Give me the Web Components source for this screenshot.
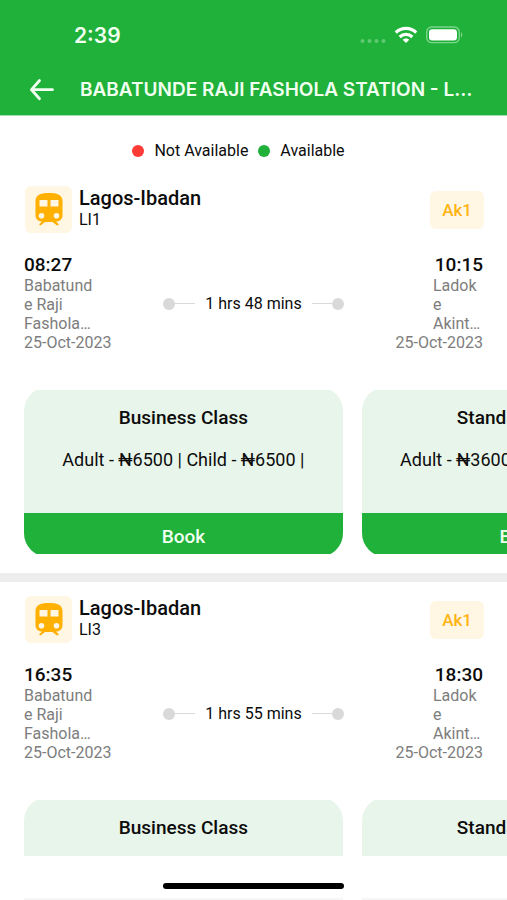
<!DOCTYPE html>
<html lang="en">
<head>
<meta charset="utf-8">
<meta name="viewport" content="width=device-width, initial-scale=1">
<title>Train schedule</title>
<style>
  :root { --green: #1fb139; --mint: #e8f5ea; --amber: #ffb414; --cream: #fff6e3; --grey: #7d7d7d; }
  html, body { height: 100%; }
  body { margin: 0; background: #fff; color: #0c0c0c; font-family: Roboto, "Liberation Sans", sans-serif; font-size: 16px; }
</style>
</head>
<body>
<schedule-screen></schedule-screen>
<script>
class Base extends HTMLElement {
  connectedCallback() {
    if (this.shadowRoot) return;
    this.attachShadow({ mode: 'open' }).innerHTML = '<style>*{box-sizing:border-box}</style>' + this.view();
  }
  a(name) { return this.getAttribute(name) || ''; }
}

customElements.define('status-bar', class extends Base {
  view() { return `
    <style>
      :host { display: flex; align-items: center; justify-content: space-between; height: 65px; padding: 6px 44px 0 74px; color: #f0fff0; }
      time { font: 600 21px/26px Inter, sans-serif; }
      .icons { display: flex; align-items: center; }
      svg { display: block; }
    </style>
    <time>2:39</time>
    <div class="icons">
      <svg width="103" height="20" viewBox="360 26 103 20" aria-hidden="true">
        <g fill="#62c973"><circle cx="362.500" cy="41" r="2"/><circle cx="369.500" cy="41" r="2"/><circle cx="376.500" cy="41" r="2"/><circle cx="383.500" cy="41" r="2"/></g>
        <g fill="none" stroke="#fff" stroke-width="3.200"><path d="M395.800 32.600a14.600 14.600 0 0 1 20.400 0"/><path d="M399.700 37a9 9 0 0 1 12.600 0"/></g>
        <path fill="#fff" d="M406 43l-3.300-3.300a4.800 4.800 0 0 1 6.600 0z"/>
        <rect x="426.700" y="27" width="32.600" height="15.600" rx="5" fill="none" stroke="#7dd48b" stroke-width="1.400"/>
        <rect x="429" y="29.200" width="28" height="11.200" rx="3.200" fill="#fff"/>
        <path fill="#7dd48b" d="M461 32.200c1.700.6 1.700 4.600 0 5.200z"/>
      </svg>
    </div>`; }
});

customElements.define('nav-bar', class extends Base {
  view() { return `
    <style>
      :host { display: flex; align-items: center; gap: 24px; height: 50px; padding: 0 24px 0 28px; color: #f0fff0; }
      button { flex: none; width: 28px; height: 28px; padding: 0; border: 0; background: none; color: inherit; }
      svg { display: block; }
      h1 { flex: 1; min-width: 0; margin: 0; font: 600 19px/26px Inter, sans-serif; white-space: nowrap; overflow: hidden; text-overflow: ellipsis; }
    </style>
    <button aria-label="Back"><svg width="28" height="28" viewBox="28 76 28 28" fill="none" stroke="currentColor" stroke-width="2.800" stroke-linecap="round" stroke-linejoin="round"><path d="M52.500 89.700H32M39.500 80.500L31.500 89.700l8 9"/></svg></button>
    <h1><slot></slot></h1>`; }
});

customElements.define('status-legend', class extends Base {
  view() { return `
    <style>
      :host { display: flex; justify-content: center; align-items: center; gap: 10px; padding: 24px 30px 24px 0; line-height: 22px; }
      span { display: flex; align-items: center; gap: 10px; }
      i { width: 12px; height: 12px; border-radius: 50%; background: var(--green); }
      .no { background: #ff3b36; }
    </style>
    <span><i class="no"></i>Not Available</span><span><i></i>Available</span>`; }
});

customElements.define('train-icon', class extends Base {
  view() { return `
    <style>
      :host { display: flex; align-items: center; justify-content: center; width: 47px; height: 47px; border-radius: 6px; background: var(--cream); }
      svg { display: block; }
    </style>
    <svg width="28" height="33" viewBox="0 0 28 33" aria-hidden="true">
      <path fill="#ffb000" fill-rule="evenodd" d="M14 0C21 0 27.500 1.500 27.500 8V22C27.500 26 25 28.500 21 28.500L24 31.500L22 32.500L17.500 29H10L5.500 32.500L4 31.500L7 28.500C3 28.500 .500 26 .500 22V8C.500 1.500 7 0 14 0ZM4.500 7V13.500H12.500V7ZM15.500 7V13.500H23.500V7ZM6.500 20A2.800 2.800 0 1 0 6.500 25.600A2.800 2.800 0 1 0 6.500 20ZM21.500 20A2.800 2.800 0 1 0 21.500 25.600A2.800 2.800 0 1 0 21.500 20Z"/>
    </svg>`; }
});

customElements.define('trip-stop', class extends Base {
  view() { return `
    <style>
      :host { display: flex; flex-direction: column; align-items: flex-start; color: var(--grey); line-height: 19px; }
      :host([end]) { align-items: flex-end; }
      b { font-size: 19px; line-height: 23px; font-weight: 500; color: #0c0c0c; }
      div { width: 76px; overflow-wrap: anywhere; }
      :host([end]) div { width: 50px; }
    </style>
    <b>${this.a('time')}</b><div><slot></slot></div><span>${this.a('date')}</span>`; }
});

customElements.define('trip-duration', class extends Base {
  view() { return `
    <style>
      :host { display: flex; align-items: center; gap: 10px; white-space: nowrap; line-height: 20px; padding-top: 2px; }
      i { display: flex; align-items: center; width: 32px; height: 12px; }
      i::before { content: ""; width: 12px; height: 12px; border-radius: 50%; background: #d9d9d9; }
      i::after { content: ""; flex: 1; height: 1px; background: #d9d9d9; }
      .end { flex-direction: row-reverse; }
    </style>
    <i></i><slot></slot><i class="end"></i>`; }
});

customElements.define('fare-card', class extends Base {
  view() { return `
    <style>
      :host { display: flex; flex-direction: column; border-radius: 24px; overflow: hidden; background: var(--mint); text-align: center; }
      h3 { margin: 0; padding: 19px 0 0; font-size: 19px; line-height: 24px; font-weight: 500; }
      p { margin: 0; padding: 19px 0 42px; font-size: 18px; line-height: 22px; white-space: nowrap; }
      button { height: 44px; padding: 3px 0 0; border: 0; background: var(--green); color: #f0fff0; font: 500 19px/24px Roboto, sans-serif; }
    </style>
    <h3>${this.a('name')}</h3><p><slot></slot></p><button>Book</button>`; }
});

customElements.define('trip-item', class extends Base {
  view() { return `
    <style>
      :host { display: block; border-bottom: 9px solid #ededed; margin-bottom: 14px; }
      header { display: flex; align-items: center; gap: 7px; padding: 0 23px 0 25px; }
      .name { flex: 1; }
      h2 { margin: 0; font-size: 20px; line-height: 24px; font-weight: 500; }
      small { display: block; font-size: 16px; line-height: 20px; padding-bottom: 3px; }
      mark { padding: 8px 12px; border-radius: 6px; background: var(--cream); color: var(--amber); font-size: 17px; line-height: 22px; font-weight: 500; }
      .times { display: grid; grid-template-columns: 1fr auto 1fr; align-items: center; padding: 20px 24px 38px; }
      .cards { display: flex; gap: 19px; padding-left: 24px; margin-bottom: 19px; overflow: hidden; }
      /* The strip trims a little off the cards' rounded ends. */
      fare-card { flex: 0 0 66%; margin: -3px 0; }
    </style>
    <header><train-icon></train-icon><div class="name"><h2>Lagos-Ibadan</h2><small>${this.a('code')}</small></div><mark>Ak1</mark></header>
    <div class="times">
      <trip-stop time="${this.a('from')}" date="25-Oct-2023">Babatunde Raji Fashola…</trip-stop>
      <trip-duration>${this.a('duration')}</trip-duration>
      <trip-stop end time="${this.a('to')}" date="25-Oct-2023">Ladoke Akint…</trip-stop>
    </div>
    <div class="cards">
      <fare-card name="Business Class">Adult - ₦6500 | Child - ₦6500 |</fare-card>
      <fare-card name="Standard Class">Adult - ₦3600 | Child - ₦3000 |</fare-card>
    </div>`; }
});

customElements.define('home-indicator', class extends Base {
  view() { return `
    <style>
      :host { display: flex; flex-direction: column; align-items: center; justify-content: space-between; height: 44px; padding-top: 27px; background: #fff; }
      .bar { width: 181px; height: 6px; border-radius: 3px; background: #000; }
      .next { align-self: stretch; display: flex; gap: 19px; padding-left: 24px; overflow: hidden; }
      .next i { flex: 0 0 66%; height: 2px; background: #f6f6f6; }
    </style>
    <div class="bar"></div><div class="next"><i></i><i></i></div>`; }
});

customElements.define('schedule-screen', class extends Base {
  view() { return `
    <style>
      :host { display: flex; flex-direction: column; height: 100vh; overflow: hidden; }
      .top { flex: none; background: var(--green); border-bottom: 1px solid #a4dfae; }
      main { flex: 1; min-height: 0; overflow: hidden; }
      home-indicator { flex: none; }
    </style>
    <div class="top"><status-bar></status-bar><nav-bar>BABATUNDE RAJI FASHOLA STATION - LAGOS</nav-bar></div>
    <main>
      <status-legend></status-legend>
      <trip-item code="LI1" from="08:27" to="10:15" duration="1 hrs 48 mins"></trip-item>
      <trip-item code="LI3" from="16:35" to="18:30" duration="1 hrs 55 mins"></trip-item>
    </main>
    <home-indicator></home-indicator>`; }
});
</script>
</body>
</html>
